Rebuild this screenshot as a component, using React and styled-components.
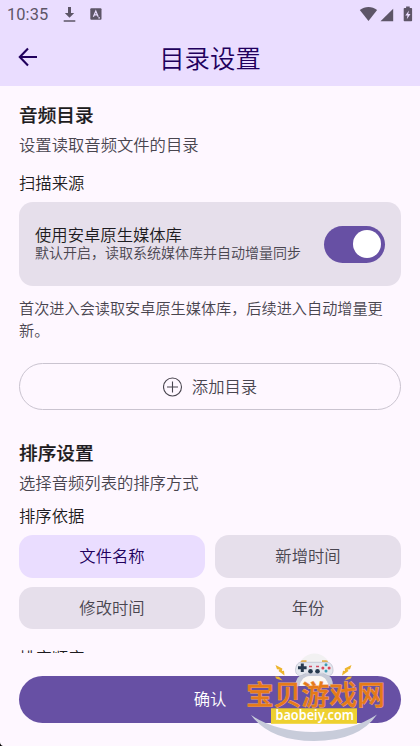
import React, { useState } from 'react';
import styled, { createGlobalStyle } from 'styled-components';

const colors = {
  surface: '#fef7ff',
  container: '#e6dfeb',
  primary: '#6750a4',
  primaryContainer: '#eaddff',
  onPrimaryContainer: '#21005d',
  text: '#1d1b20',
  muted: '#49454f',
  outline: '#cac4d0',
  status: '#5d5567'
};

const GlobalStyle = createGlobalStyle`
  * {
    box-sizing: border-box;
  }

  body {
    margin: 0;
    background: ${colors.surface};
    font-family: Roboto, 'Noto Sans CJK SC', sans-serif;
    font-weight: 350;
  }

  button {
    font-family: inherit;
    font-weight: inherit;
    cursor: pointer;
  }
`;

const Screen = styled.div`
  position: relative;
  display: flex;
  flex-direction: column;
  width: 420px;
  height: 746px;
  overflow: hidden;
  color: ${colors.text};
  background: ${colors.surface};
`;

const Header = styled.header`
  flex: none;
  height: 86px;
  background: ${colors.primaryContainer};
`;

const StatusBar = styled.div`
  display: flex;
  align-items: center;
  height: 28px;
  padding: 0 7px;
  font-size: 16.4px;
  font-weight: 400;
  color: ${colors.status};

  svg {
    display: block;
  }
`;

const Clock = styled.span`
  width: 56px;
  letter-spacing: 0.1px;
`;

const StatusIcons = styled.div`
  display: flex;
  margin-left: auto;
`;

const TitleBar = styled.div`
  display: grid;
  grid-template-columns: 56px 1fr 56px;
  align-items: center;
  height: 58px;
`;

const BackButton = styled.button`
  display: flex;
  justify-content: center;
  padding: 0;
  border: 0;
  background: none;
  color: ${colors.onPrimaryContainer};
`;

const Title = styled.h1`
  margin: 3px 0 0;
  text-align: center;
  font-size: 25.4px;
  font-weight: 350;
  line-height: 36px;
  color: ${colors.onPrimaryContainer};
`;

const Content = styled.main`
  flex: none;
  height: 567px;
  padding: 17px 19px 0;
  overflow: hidden;
`;

const Section = styled.section`
  margin-bottom: 31px;
`;

const SectionTitle = styled.h2`
  margin: 0 0 5px;
  font-size: 18.67px;
  font-weight: 500;
  line-height: 26px;
  -webkit-text-stroke: 0.2px;
`;

const Description = styled.p`
  margin: 0;
  font-size: 16.33px;
  line-height: 24px;
  color: ${colors.muted};
`;

const Label = styled.h3`
  margin: ${({ $top }) => $top}px 0 6px;
  font-size: 16.33px;
  font-weight: 350;
  line-height: 24px;
`;

const SourceCard = styled.div`
  display: flex;
  align-items: center;
  justify-content: space-between;
  height: 84px;
  padding: 0 16px;
  border-radius: 14px;
  background: ${colors.container};
`;

const SourceText = styled.div`
  padding-top: 1px;
`;

const SourceName = styled.div`
  font-size: 16.33px;
  line-height: 18px;
`;

const SourceNote = styled.div`
  font-size: 14px;
  line-height: 17px;
  color: ${colors.muted};
`;

const Switch = styled.button`
  display: flex;
  justify-content: ${({ $on }) => ($on ? 'flex-end' : 'flex-start')};
  width: 61px;
  height: 37px;
  padding: 4.5px;
  border: 0;
  border-radius: 19px;
  background: ${({ $on }) => ($on ? colors.primary : colors.outline)};
`;

const Thumb = styled.span`
  width: 28px;
  height: 28px;
  border-radius: 50%;
  background: #fff;
`;

const Hint = styled.p`
  margin: 11.5px 0 21.5px;
  font-size: 15.17px;
  line-height: 22px;
  color: ${colors.muted};
`;

const AddButton = styled.button`
  display: flex;
  align-items: center;
  justify-content: center;
  gap: 9px;
  width: 100%;
  height: 47px;
  padding: 0 0 1px;
  border: 1px solid ${colors.outline};
  border-radius: 24px;
  background: none;
  font-size: 16.33px;
  color: ${colors.muted};
`;

const OptionGrid = styled.div`
  display: grid;
  grid-template-columns: 1fr 1fr;
  gap: 9px 10px;
`;

const Option = styled.button`
  height: 42.6px;
  padding: 0 0 2px;
  border: 0;
  border-radius: 14px;
  font-size: 16.33px;
  color: ${({ $active }) => ($active ? colors.onPrimaryContainer : colors.muted)};
  background: ${({ $active }) => ($active ? colors.primaryContainer : colors.container)};
`;

const Footer = styled.footer`
  padding: 23px 19px 0;
`;

const ConfirmButton = styled.button`
  width: 100%;
  height: 46.6px;
  padding: 0 0 3px;
  border: 0;
  border-radius: 24px;
  font-size: 16.33px;
  color: #fff;
  background: ${colors.primary};
`;

const Watermark = styled.svg`
  position: absolute;
  right: 30px;
  bottom: 0;
  pointer-events: none;
`;

const Corner = styled.svg`
  position: absolute;
  left: 0;
  bottom: 0;
`;

const InputBadge = styled.svg`
  margin-left: 14px;
`;

const DownloadIcon = () => (
  <svg width="13" height="17" viewBox="0 0 13 17" fill="currentColor">
    <path d="M5 1h3v6h3.2L6.5 11.7 1.8 7H5zM.7 14.3h11.6v1.5H.7z" />
  </svg>
);

const KeyboardIcon = () => (
  <InputBadge width="12" height="12" viewBox="0 0 12 12">
    <rect x=".3" y=".2" width="11.2" height="11.6" rx="1" fill="currentColor" />
    <path
      d="M3.4 8.8 5.8 3l2.4 5.8M4.3 6.8h3M8.3 9.8h1.7"
      fill="none"
      stroke={colors.primaryContainer}
      strokeWidth="1.2"
    />
  </InputBadge>
);

const SystemIcons = () => (
  <svg width="54" height="17" viewBox="0 0 54 17" fill="currentColor">
    <path d="M.8 4.1C6-.1 13-.1 18.1 4.1L9.5 15z" />
    <path d="M21.5 15.2 34.2 2.8v12.4z" />
    <path
      fillRule="evenodd"
      d="M45.5 2h1.6V.6h3.6V2h1.6q.8 0 .8.8v11.7q0 .8-.8.8h-6.8q-.8 0-.8-.8V2.8q0-.8.8-.8zM50 4.5 46.3 9.5h2.2L47.8 13.2 51.5 8h-2.3z"
    />
  </svg>
);

const BackIcon = () => (
  <svg width="20" height="20" viewBox="0 0 20 20" fill="none" stroke="currentColor" strokeWidth="2.1">
    <path d="M10 1.5 1.8 10 10 18.5M2 10h17" />
  </svg>
);

const PlusIcon = () => (
  <svg width="20" height="21" viewBox="0 0 20 21" fill="none" stroke="currentColor" strokeWidth="1.1">
    <circle cx="9.5" cy="11" r="9" />
    <path d="M9.5 5.5v11M4 11h11" />
  </svg>
);

const SiteMark = () => (
  <Watermark width="150" height="96" viewBox="240 650 150 96">
    <circle cx="314.5" cy="669.5" r="16" fill="#f2f1f2" />
    <path d="M295 687q1-12 9-13h21q8 1 8 13l-4-1q-4-10-10-10h-9q-7 0-11 10z" fill="#c6cad7" />
    <path d="M299 686q3-10 11-10h9q7 0 10 10z" fill="#fbf8f5" />
    <path d="M300.5 662q0-1.800 2-1.800h4v1.800zM322 662v-1.800h4q2 0 2 1.800z" fill="#e5ae44" />
    <path
      d="M301 662.3h26c4 0 6 4 6 8 0 4-3 6.300-6 5l-4-2h-17l-4 2c-3 1.300-6.500-1-6.500-5 0-4 2-8 5.500-8z"
      fill="#e4e7ee"
      stroke="#b9bdcb"
      strokeWidth=".7"
    />
    <path d="M302.3 663.5v8.600M298 667.8h8.600" stroke="#26394d" strokeWidth="3" />
    <circle cx="310.5" cy="671.3" r="2.3" fill="#26394d" />
    <circle cx="317.5" cy="671.3" r="2.3" fill="#26394d" />
    <path d="M309 666.5h3M316 666.5h3" stroke="#d64e65" strokeWidth="1.3" />
    <circle cx="326" cy="664.8" r="1.5" fill="#3c9cb4" />
    <circle cx="326" cy="671" r="1.5" fill="#3c9cb4" />
    <circle cx="322.9" cy="667.9" r="1.5" fill="#d94758" />
    <circle cx="329.1" cy="667.9" r="1.5" fill="#d94758" />
    <g fill="#edb52d">
      <path d="m275.5 665 6.800 3.500-.3 2.500 2-.3.5 4.800-6-4.500 1-1.500-2.500-.3z" />
      <path d="m351.5 665-6.800 3.500.3 2.500-2-.3-1 4.800 6.500-4.500-1-1.500 2.500-.3z" />
      <path d="m275 676.5 4 .3 3.500 3.700-6-1.800zM352 676.5l-4 .3-3.500 3.700 6-1.800z" />
    </g>
    <path d="M251 715q24 16.500 63 17 38-.5 63-17.500-18 26.500-63 26.500-44 0-63-26z" fill="#c8ccda" />
    <text
      x="246"
      y="704.5"
      textLength="139"
      lengthAdjust="spacingAndGlyphs"
      fontFamily="'Noto Sans CJK SC', sans-serif"
      fontSize="27"
      fontWeight="500"
      fill="#e67a18"
      stroke="#eda672"
      strokeWidth=".9"
      paintOrder="stroke"
    >
      宝贝游戏网
    </text>
    <rect x="271" y="708.3" width="86" height="15.5" fill="#eed02f" />
    <text
      x="275.5"
      y="720.3"
      textLength="78.5"
      lengthAdjust="spacingAndGlyphs"
      fontFamily="'Noto Sans', sans-serif"
      fontSize="14.5"
      fontWeight="600"
      fill="#fff"
    >
      baobeiy.com
    </text>
  </Watermark>
);

const sortFields = ['文件名称', '新增时间', '修改时间', '年份'];

const App = () => {
  const [useLibrary, setUseLibrary] = useState(true);
  const [sortField, setSortField] = useState('文件名称');

  return (
    <Screen>
      <GlobalStyle />
      <Header>
        <StatusBar>
          <Clock>10:35</Clock>
          <DownloadIcon />
          <KeyboardIcon />
          <StatusIcons>
            <SystemIcons />
          </StatusIcons>
        </StatusBar>
        <TitleBar>
          <BackButton aria-label="返回"><BackIcon /></BackButton>
          <Title>目录设置</Title>
        </TitleBar>
      </Header>
      <Content>
        <Section>
          <SectionTitle>音频目录</SectionTitle>
          <Description>设置读取音频文件的目录</Description>
          <Label $top={14}>扫描来源</Label>
          <SourceCard>
            <SourceText>
              <SourceName>使用安卓原生媒体库</SourceName>
              <SourceNote>默认开启，读取系统媒体库并自动增量同步</SourceNote>
            </SourceText>
            <Switch $on={useLibrary} onClick={() => setUseLibrary(!useLibrary)} aria-label="媒体库">
              <Thumb />
            </Switch>
          </SourceCard>
          <Hint>首次进入会读取安卓原生媒体库，后续进入自动增量更新。</Hint>
          <AddButton>
            <PlusIcon />
            添加目录
          </AddButton>
        </Section>
        <Section>
          <SectionTitle>排序设置</SectionTitle>
          <Description>选择音频列表的排序方式</Description>
          <Label $top={9}>排序依据</Label>
          <OptionGrid>
            {sortFields.map(name => (
              <Option key={name} $active={name === sortField} onClick={() => setSortField(name)}>
                {name}
              </Option>
            ))}
          </OptionGrid>
          <Label $top={18}>排序顺序</Label>
        </Section>
      </Content>
      <Footer>
        <ConfirmButton>确认</ConfirmButton>
      </Footer>
      <SiteMark />
      <Corner width="3" height="4" viewBox="0 0 3 4">
        <path d="M0 0q0 3 3 4H0z" fill="#000" />
      </Corner>
    </Screen>
  );
};

export default App;
